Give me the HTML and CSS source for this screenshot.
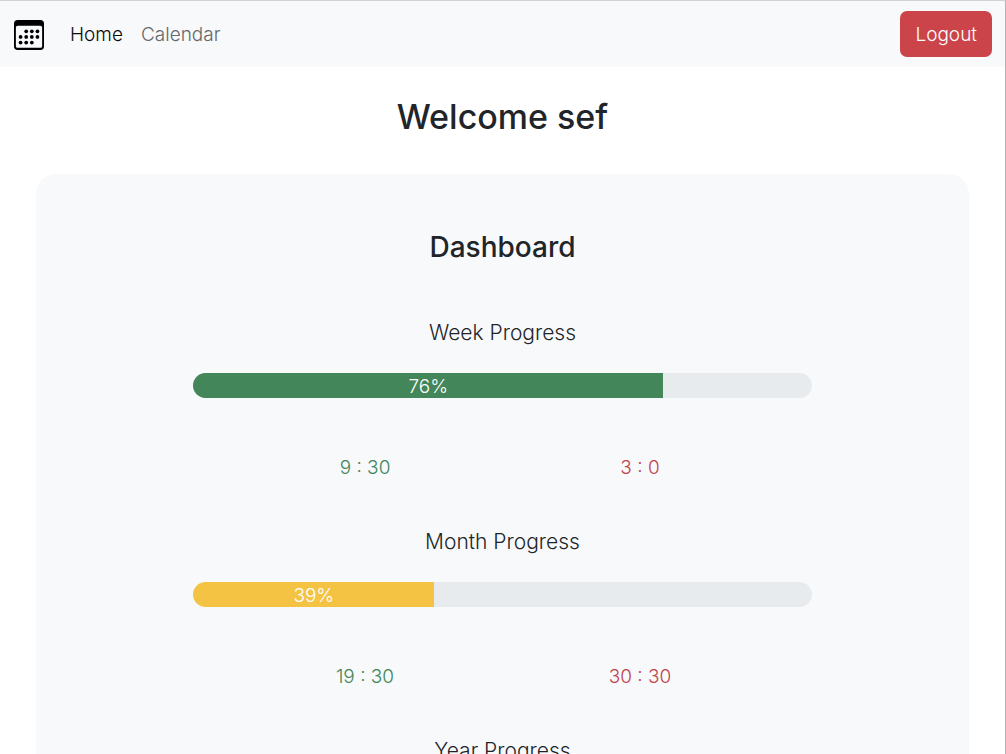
FILE: index.html
```html
<!DOCTYPE html>
<html lang="en">
<head>
<meta charset="utf-8">
<meta name="viewport" content="width=device-width, initial-scale=1">
<title>Dashboard</title>
<link rel="stylesheet" href="styles.css">
</head>
<body>
<header class="navbar">
  <a class="brand" href="#" aria-label="Calendar home">
    <svg class="brand-icon" viewBox="0 0 16 16" fill="currentColor" aria-hidden="true">
      <path fill-rule="evenodd" d="M2 0h12a2 2 0 0 1 2 2v12a2 2 0 0 1-2 2H2a2 2 0 0 1-2-2V2a2 2 0 0 1 2-2zM1 3.857V14c0 .474.448.857 1 .857h12c.552 0 1-.383 1-.857V3.857C15 3.384 14.552 3 14 3H2c-.552 0-1 .384-1 .857z"/>
      <circle cx="6.5" cy="6" r="1"/><circle cx="9.5" cy="6" r="1"/><circle cx="12.5" cy="6" r="1"/>
      <circle cx="3.5" cy="9" r="1"/><circle cx="6.5" cy="9" r="1"/><circle cx="9.5" cy="9" r="1"/><circle cx="12.5" cy="9" r="1"/>
      <circle cx="3.5" cy="12" r="1"/><circle cx="6.5" cy="12" r="1"/><circle cx="9.5" cy="12" r="1"/>
    </svg>
  </a>
  <nav class="nav-links">
    <a class="nav-link active" href="#">Home</a>
    <a class="nav-link" href="#">Calendar</a>
  </nav>
  <button class="logout" type="button">Logout</button>
</header>
<main class="page">
  <h1 class="welcome">Welcome sef</h1>
  <section class="card">
    <h2 class="card-title">Dashboard</h2>
    <section class="period">
      <h3 class="period-title">Week Progress</h3>
      <div class="progress" role="progressbar" aria-label="Week Progress" aria-valuenow="76" aria-valuemin="0" aria-valuemax="100">
        <div class="bar bar-green" style="width: 76%">76%</div>
      </div>
      <div class="times"><span class="done">9 : 30</span><span class="left">3 : 0</span></div>
    </section>
    <section class="period">
      <h3 class="period-title">Month Progress</h3>
      <div class="progress" role="progressbar" aria-label="Month Progress" aria-valuenow="39" aria-valuemin="0" aria-valuemax="100">
        <div class="bar bar-yellow" style="width: 39%">39%</div>
      </div>
      <div class="times"><span class="done">19 : 30</span><span class="left">30 : 30</span></div>
    </section>
    <section class="period">
      <h3 class="period-title">Year Progress</h3>
    </section>
  </section>
</main>
</body>
</html>
```
FILE: styles.css
```css
* {
  box-sizing: border-box;
}

html {
  scrollbar-width: none;
}

body {
  margin: 0;
  min-height: 100vh;
  border-top: 1px solid #d0d1d3;
  border-right: 1px solid #b4b4b6;
  background: #fff;
  color: #212529;
  font-family: Inter, "Liberation Sans", sans-serif;
  font-size: 19px;
  font-weight: 300;
  line-height: 30px;
}

h1,
h2,
h3 {
  margin: 0;
  text-align: center;
}

.navbar {
  display: flex;
  align-items: center;
  padding: 10px 13px 10px 14px;
  background: #f8f9fb;
}

.brand {
  display: flex;
  margin-right: 26px;
  padding-top: 2px;
  color: #000;
}

.brand-icon {
  width: 30px;
  height: 30px;
}

.nav-links {
  display: flex;
  gap: 18px;
  flex: 1;
  padding-top: 2px;
}

.nav-link {
  color: #666769;
  text-decoration: none;
}

.nav-link.active {
  color: #0c0c0d;
}

.logout {
  padding: 9px 15px 7px;
  border: 0;
  border-radius: 7px;
  background: #cb444a;
  color: #fff;
  font: inherit;
}

.page {
  padding: 28px 36px;
}

.welcome {
  font-size: 34px;
  font-weight: 500;
  line-height: 44px;
}

.card {
  margin-top: 35px;
  padding: 55px 54px;
  border-radius: 20px;
  background: #f8f9fb;
}

.card-title {
  margin-bottom: 52px;
  font-size: 28px;
  font-weight: 500;
  line-height: 36px;
}

.period {
  margin-bottom: 44px;
}

.period-title {
  font-size: 21px;
  font-weight: 300;
  line-height: 32px;
}

.progress {
  width: 75%;
  height: 25px;
  margin: 24px auto 56px;
  overflow: hidden;
  border-radius: 13px;
  background: #e8ebed;
}

.bar {
  height: 100%;
  padding-top: 1px;
  color: #fff;
  line-height: 25px;
  text-align: center;
}

.bar-green {
  background: #428659;
}

.bar-yellow {
  background: #f5c344;
}

.times {
  display: flex;
  justify-content: center;
  line-height: 28px;
  text-align: center;
}

.done,
.left {
  width: 33.333%;
}

.done {
  color: #428659;
}

.left {
  color: #c0444c;
}
```
